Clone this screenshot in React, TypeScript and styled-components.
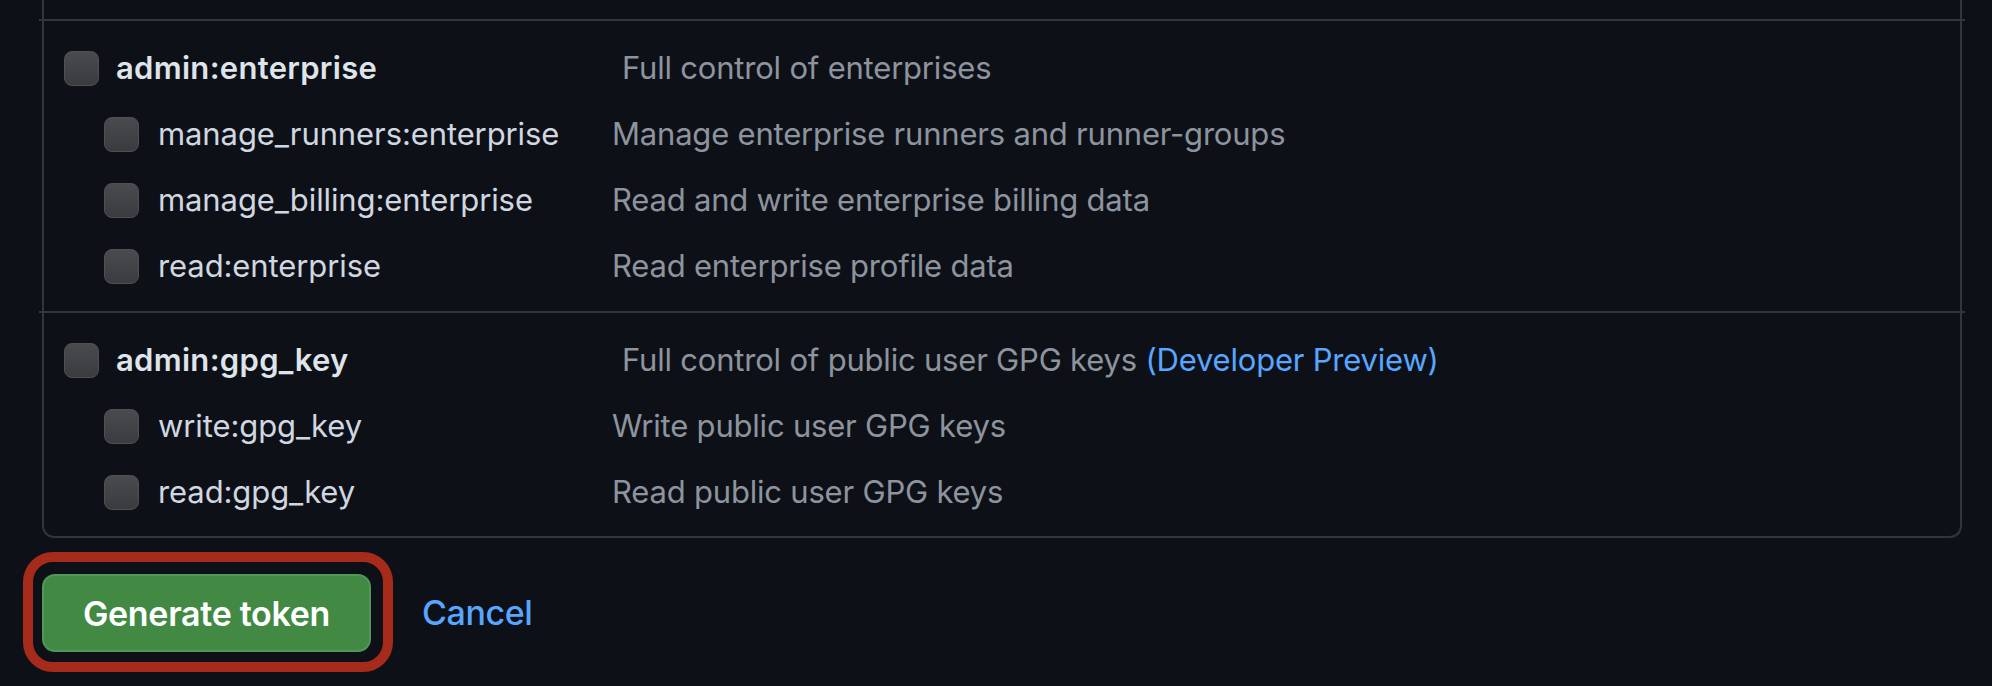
import React from 'react';
import styled, { createGlobalStyle } from 'styled-components';

type Scope = {
  name: string;
  description: string;
  preview?: boolean;
  children: { name: string; description: string }[];
};

const scopes: Scope[] = [
  {
    name: 'admin:enterprise',
    description: 'Full control of enterprises',
    children: [
      { name: 'manage_runners:enterprise', description: 'Manage enterprise runners and runner-groups' },
      { name: 'manage_billing:enterprise', description: 'Read and write enterprise billing data' },
      { name: 'read:enterprise', description: 'Read enterprise profile data' },
    ],
  },
  {
    name: 'admin:gpg_key',
    description: 'Full control of public user GPG keys',
    preview: true,
    children: [
      { name: 'write:gpg_key', description: 'Write public user GPG keys' },
      { name: 'read:gpg_key', description: 'Read public user GPG keys' },
    ],
  },
];

const GlobalStyle = createGlobalStyle`
  body {
    margin: 0;
    background: #0d1117;
    font-family: Inter, "Liberation Sans", sans-serif;
    -webkit-font-smoothing: antialiased;
  }
`;

const Page = styled.div`
  height: 686px;
  overflow: hidden;
  background: #0d1117;
`;

const ScopeBox = styled.div`
  margin: 0 30px 0 42px;
  padding-top: 19px;
  border: 2px solid #30363d;
  border-top: none;
  border-radius: 0 0 12px 12px;
`;

const Separator = styled.hr`
  height: 2px;
  margin: 0 -5px;
  border: 0;
  background: #30363d;
`;

const Group = styled.div<{ $last?: boolean }>`
  padding: 14px 0 ${(p) => (p.$last ? 11 : 12)}px 20px;
`;

const Row = styled.div`
  display: grid;
  grid-template-columns: 548px 1fr;
  align-items: center;
  height: 66px;
  font-size: 31px;
  line-height: 36px;
`;

const Label = styled.label<{ $child?: boolean }>`
  display: flex;
  align-items: center;
  gap: ${(p) => (p.$child ? 19 : 17)}px;
  padding-left: ${(p) => (p.$child ? 40 : 0)}px;
  color: ${(p) => (p.$child ? '#d1d7e0' : '#dfe4ea')};
  font-weight: ${(p) => (p.$child ? 400 : 600)};
  letter-spacing: ${(p) => (p.$child ? '-0.1px' : '0.3px')};
`;

const Checkbox = styled.span`
  width: 35px;
  height: 35px;
  flex: none;
  box-sizing: border-box;
  border-radius: 8px;
  border: 1px solid #4f5054;
  background: linear-gradient(#4a4b4f, #3a3b3f);
`;

const Desc = styled.span<{ $lead?: boolean }>`
  padding-left: ${(p) => (p.$lead ? 10 : 0)}px;
  color: #8d949e;
  letter-spacing: -0.2px;
`;

const Preview = styled.span`
  color: #58a6ff;
`;

const Actions = styled.div`
  display: flex;
  align-items: center;
  gap: 29px;
  margin: 14px 0 0 23px;
`;

const Highlight = styled.div`
  padding: 12px 12px 10px 9px;
  border: 10px solid #a72b1b;
  border-radius: 30px;
`;

const PrimaryButton = styled.button`
  width: 329px;
  height: 78px;
  border: 2px solid #52965a;
  border-radius: 13px;
  background: #428a44;
  color: #ffffff;
  font-family: Inter, "Liberation Sans", sans-serif;
  font-size: 34px;
  font-weight: 600;
  letter-spacing: -0.3px;
`;

const CancelLink = styled.a`
  color: #58a6ff;
  font-size: 34px;
  font-weight: 500;
  letter-spacing: -0.4px;
  text-decoration: none;
`;

export default function App() {
  return (
    <Page>
      <GlobalStyle />
      <ScopeBox>
        {scopes.map((scope, i) => (
          <React.Fragment key={scope.name}>
            <Separator />
            <Group $last={i === scopes.length - 1}>
              <Row>
                <Label>
                  <Checkbox />
                  {scope.name}
                </Label>
                <Desc $lead>
                  {scope.description}
                  {scope.preview && <Preview> (Developer Preview)</Preview>}
                </Desc>
              </Row>
              {scope.children.map((child) => (
                <Row key={child.name}>
                  <Label $child>
                    <Checkbox />
                    {child.name}
                  </Label>
                  <Desc>{child.description}</Desc>
                </Row>
              ))}
            </Group>
          </React.Fragment>
        ))}
      </ScopeBox>
      <Actions>
        <Highlight>
          <PrimaryButton>Generate token</PrimaryButton>
        </Highlight>
        <CancelLink href="#">Cancel</CancelLink>
      </Actions>
    </Page>
  );
}
